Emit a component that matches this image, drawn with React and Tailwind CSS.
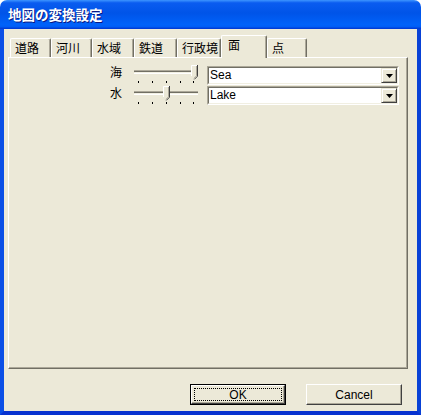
const tabs = [
  { label: '道路', w: 'w-[41px]' },
  { label: '河川', w: 'w-[41px]' },
  { label: '水域', w: 'w-[42px]' },
  { label: '鉄道', w: 'w-[43px]' },
  { label: '行政境', w: 'w-[44px]' },
  { label: '面', w: 'w-[46px]', active: true },
  { label: '点', w: 'w-[40px]' },
]

const jp = { fontFamily: '"Noto Sans CJK JP", "DejaVu Sans", sans-serif' }
const latin = { fontFamily: '"Liberation Sans", Arial, sans-serif' }

const Slider = ({ pos }) => {
  const x = pos
  return (
    <svg width="70" height="21" viewBox="0 0 70 21" className="block">
      <rect x="2" y="6" width="64" height="1" fill="#aca899" />
      <rect x="2" y="7" width="64" height="1" fill="#716f64" />
      <rect x="3" y="8" width="63" height="1" fill="#f1efe2" />
      <rect x="2" y="9" width="64" height="1" fill="#ffffff" />
      {[6, 20, 34, 48, 61].map((t) => (
        <rect key={t} x={t} y="17" width="1" height="2" fill="#000" />
      ))}
      <path d={`M${x} 1 H${x + 6} V12 L${x + 3} 15 L${x} 12 Z`} fill="#ece9d8" />
      <path d={`M${x + 0.5} 12 V1.5 H${x + 6}`} stroke="#ffffff" fill="none" />
      <path d={`M${x + 6.5} 1 V12.2 L${x + 3.3} 15.4`} stroke="#404040" fill="none" />
      <path d={`M${x + 5.5} 2 V11.8 L${x + 3} 14.3`} stroke="#aca899" fill="none" />
    </svg>
  )
}

const Combo = ({ value, className = '' }) => (
  <div className={`w-[192px] h-[19px] border border-t-[#aca899] border-l-[#aca899] border-r-white border-b-white ${className}`}>
    <div className="h-full flex border border-t-[#716f64] border-l-[#716f64] border-r-[#f1efe2] border-b-[#f1efe2] bg-white">
      <div className="flex-1 pl-[1px] text-[12px] leading-[15px] text-black" style={latin}>{value}</div>
      <div className="w-[16px] h-full flex items-center justify-center bg-[#ece9d8] border border-t-[#ece9d8] border-l-[#ece9d8] border-r-[#404040] border-b-[#404040] shadow-[inset_1px_1px_0_#fff,inset_-1px_-1px_0_#aca899]">
        <svg width="7" height="4" viewBox="0 0 7 4"><path d="M0 0 H7 L3.5 4 Z" fill="#000" /></svg>
      </div>
    </div>
  </div>
)

const Button = ({ children, isDefault }) => (
  <div className={`w-[96px] h-[21px] ${isDefault ? 'border border-black' : ''}`}>
    <div className="h-full border border-t-white border-l-white border-r-[#404040] border-b-[#404040] bg-[#ece9d8] shadow-[inset_-1px_-1px_0_#aca899] flex items-center justify-center p-[2px]">
      <div className={`w-full h-full flex items-center justify-center text-[12px] leading-none text-black ${isDefault ? 'outline outline-1 outline-dotted outline-black -outline-offset-1' : ''}`} style={latin}>
        {children}
      </div>
    </div>
  </div>
)

export default function App() {
  return (
    <div className="w-[421px] h-[415px] bg-white overflow-hidden">
      <div className="h-[29px] rounded-t-[7px] bg-[linear-gradient(to_bottom,#3d95ff_0%,#0a5cf0_10%,#0054e8_45%,#0062fa_85%,#005cf5_93%,#003dd7_97%,#003dd7_100%)] flex items-center pl-[8px]">
        <span className="text-white font-bold text-[13.5px] leading-none [text-shadow:1px_1px_0_#0a1883]" style={jp}>地図の変換設定</span>
      </div>
      <div className="h-[386px] bg-[#ece9d8] border-l-4 border-r-4 border-b-4 border-l-[#0b4fe6] border-r-[#0841d6] border-b-[#0832d0] pt-[6px] pl-[4px] flex flex-col">
        <div className="flex items-end h-[22px] pl-[2px]">
          {tabs.map((t) =>
            t.active ? (
              <div key={t.label} className={`${t.w} h-[23px] -mb-[1px] relative z-10 bg-[#ece9d8] border-l border-t border-r border-l-white border-t-white border-r-[#716f64] rounded-t-[2px] shadow-[inset_-1px_0_0_#aca899] pl-[6px] pt-[1px] text-[12px] leading-[16px] text-black`} style={jp}>
                {t.label}
              </div>
            ) : (
              <div key={t.label} className={`${t.w} h-[19px] bg-[#ece9d8] border-l border-t border-r border-l-white border-t-white border-r-[#716f64] rounded-t-[2px] shadow-[inset_-1px_0_0_#aca899] pl-[4px] pt-[1px] text-[12px] leading-[16px] text-black`} style={jp}>
                {t.label}
              </div>
            )
          )}
        </div>
        <div className="w-[400px] h-[312px] border border-t-white border-l-white border-r-[#716f64] border-b-[#716f64] shadow-[inset_-1px_-1px_0_#aca899] pt-[6px] pl-[99px]">
          <div className="flex h-[21px]">
            <div className="w-[24px] pl-[2px] pt-[1px] text-[12px] leading-[14px] text-black" style={jp}>海</div>
            <Slider pos={59} />
            <Combo value="Sea" className="ml-[5px] mt-[2px]" />
          </div>
          <div className="flex h-[21px]">
            <div className="w-[24px] pl-[2px] pt-[1px] text-[12px] leading-[14px] text-black" style={jp}>水</div>
            <Slider pos={31} />
            <Combo value="Lake" className="ml-[5px] mt-[1px]" />
          </div>
        </div>
        <div className="flex justify-end gap-[20px] pr-[15px] mt-[15px]">
          <Button isDefault>OK</Button>
          <Button>Cancel</Button>
        </div>
      </div>
    </div>
  )
}
